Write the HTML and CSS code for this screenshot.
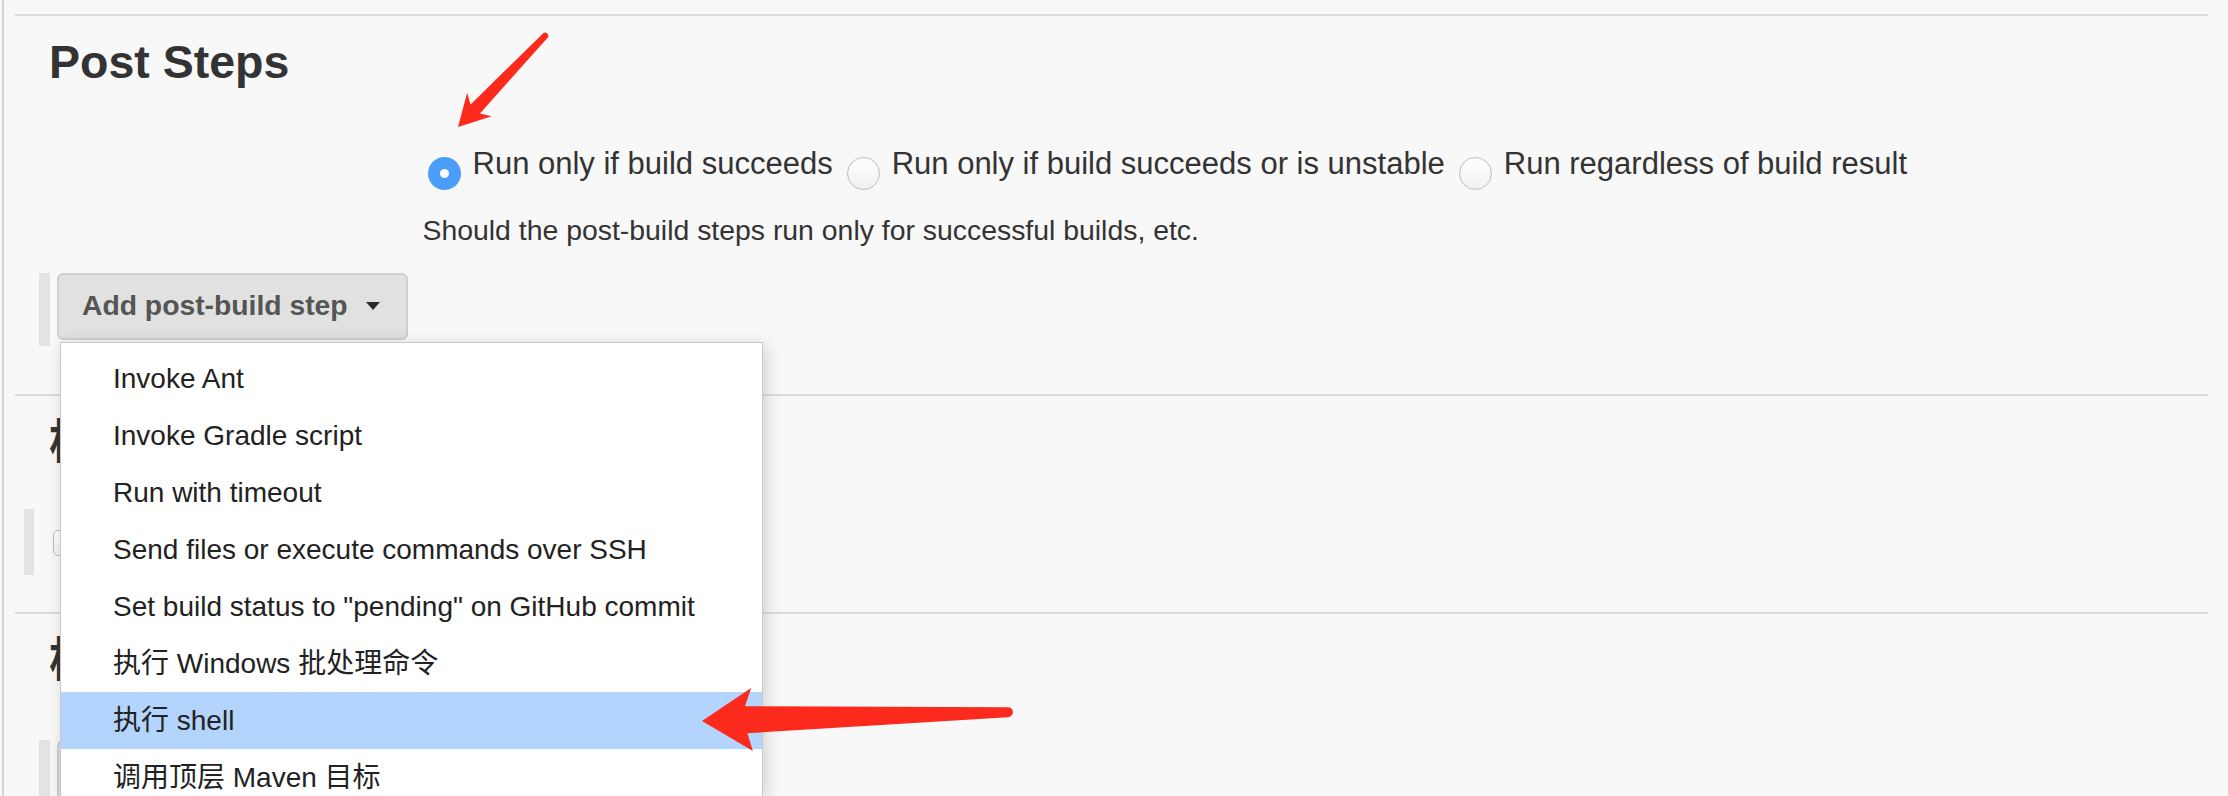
FILE: index.html
```html
<!DOCTYPE html>
<html lang="zh-CN">
<head>
<meta charset="utf-8">
<title>Post Steps</title>
<link rel="stylesheet" href="styles.css">
</head>
<body>
<div class="page">
  <section class="section section-post">
    <h2 class="section-title">Post Steps</h2>
    <div class="field">
      <div class="radio-row">
        <label class="radio-option"><span class="radio checked"></span><span class="radio-label">Run only if build succeeds</span></label>
        <label class="radio-option"><span class="radio"></span><span class="radio-label">Run only if build succeeds or is unstable</span></label>
        <label class="radio-option"><span class="radio"></span><span class="radio-label">Run regardless of build result</span></label>
      </div>
      <div class="help">Should the post-build steps run only for successful builds, etc.</div>
    </div>
    <div class="add-row">
      <span class="handle"></span>
      <button class="add-btn" type="button">Add post-build step<span class="caret"></span></button>
    </div>
  </section>

  <section class="section section-settings">
    <h2 class="section-title">构建设置</h2>
    <div class="check-row">
      <span class="handle handle-narrow"></span>
      <span class="checkbox"></span>
    </div>
  </section>

  <section class="section section-actions">
    <h2 class="section-title">构建后操作</h2>
    <div class="add-row">
      <span class="handle handle-tall"></span>
      <span class="add-btn add-btn-hidden"></span>
    </div>
  </section>
</div>

<ul class="menu">
  <li class="menu-item">Invoke Ant</li>
  <li class="menu-item">Invoke Gradle script</li>
  <li class="menu-item">Run with timeout</li>
  <li class="menu-item">Send files or execute commands over SSH</li>
  <li class="menu-item">Set build status to "pending" on GitHub commit</li>
  <li class="menu-item">执行 Windows 批处理命令</li>
  <li class="menu-item active">执行 shell</li>
  <li class="menu-item">调用顶层 Maven 目标</li>
</ul>

<svg class="annotations" width="2228" height="796" viewBox="0 0 2228 796" xmlns="http://www.w3.org/2000/svg">
  <g transform="translate(458 127) rotate(-46.3)">
    <path class="arrow" d="M0,0 L31,-17 L25,-6.5 L126,-3.2 A3.2,3.2 0 0 1 126,3.2 L25,6.5 L31,17 Z"/>
  </g>
  <g transform="translate(702 721) rotate(-1.66)">
    <path class="arrow" d="M0,0 L50,-31.5 L43.5,-13.5 L306,-5 A5,5 0 0 1 306,5 L45,13.5 L50,31.5 Z"/>
  </g>
</svg>
</body>
</html>
```

FILE: styles.css
```css
html, body {
  margin: 0;
  height: 796px;
  overflow: hidden;
}

body {
  position: relative;
  background: #f8f8f8;
  font-family: "Liberation Sans", Arial, "Noto Sans CJK SC", sans-serif;
  color: #333;
}

.page {
  margin-left: 2px;
  border-left: 2px solid #d3d3d3;
  height: 796px;
  box-sizing: border-box;
  padding: 14px 20px 0 11px;
  overflow: hidden;
}

.section {
  border-top: 2px solid #dcdcdc;
  padding-left: 34px;
}

.section-post { padding-bottom: 48px; }
.section-settings { padding-bottom: 37px; }

.section-title {
  margin: 18px 0 0;
  font-size: 46.5px;
  line-height: 56px;
  font-weight: bold;
  color: #333;
  font-family: "Liberation Sans", Arial, "Noto Sans CJK SC", sans-serif;
}

.field {
  margin: 54px 0 0 373.5px;
}

.radio-row {
  display: flex;
  font-size: 31px;
  line-height: 40px;
  color: #333;
}

.radio-option {
  display: flex;
  align-items: flex-start;
  white-space: nowrap;
}

.radio-option + .radio-option {
  margin-left: 14.5px;
}

.radio {
  box-sizing: border-box;
  width: 33px;
  height: 33px;
  margin-top: 13px;
  margin-bottom: -6px;
  border-radius: 50%;
  border: 1.5px solid #bcbcbc;
  background: linear-gradient(#ffffff, #f1f1f1);
  flex: none;
}

.radio-option:first-child .radio {
  margin-left: 5.5px;
}

.radio.checked {
  border: none;
  background: #4a9df8;
  display: flex;
  align-items: center;
  justify-content: center;
}

.radio.checked::after {
  content: "";
  width: 9px;
  height: 9px;
  border-radius: 50%;
  background: #fff;
}

.radio-label {
  margin-left: 11.5px;
}

.help {
  margin-top: 28px;
  font-size: 28.4px;
  line-height: 36px;
  color: #333;
  white-space: nowrap;
}

.add-row {
  display: flex;
  align-items: flex-start;
  margin: 25px 0 0 -10px;
}

.section-actions .add-row {
  margin-top: 52px;
}

.handle {
  width: 11px;
  height: 73px;
  background: #e3e3e3;
  flex: none;
}

.handle-tall {
  height: 56px;
}

.add-btn {
  display: inline-flex;
  align-items: center;
  margin-left: 7px;
  height: 67px;
  box-sizing: border-box;
  padding: 0 26px 2px 23px;
  border: 2px solid #cfcfcf;
  border-radius: 6px;
  background: #e1e1e1;
  color: #555;
  font-family: "Liberation Sans", Arial, "Noto Sans CJK SC", sans-serif;
  font-size: 28.3px;
  font-weight: bold;
  line-height: 61px;
  white-space: nowrap;
}

.add-btn-hidden {
  width: 300px;
  height: 56px;
  border-bottom: none;
  border-radius: 6px 6px 0 0;
}

.caret {
  width: 0;
  height: 0;
  margin-left: 18px;
  border-left: 7px solid transparent;
  border-right: 7px solid transparent;
  border-top: 8px solid #2a2a2a;
}

.check-row {
  display: flex;
  align-items: flex-start;
  margin: 39px 0 0 -25px;
}

.handle-narrow {
  width: 10px;
  height: 66px;
}

.checkbox {
  box-sizing: border-box;
  width: 26px;
  height: 26px;
  margin: 21px 0 0 19px;
  border: 1.5px solid #bcbcbc;
  border-radius: 5px;
  background: linear-gradient(#ffffff, #f1f1f1);
  flex: none;
}

.menu {
  position: absolute;
  left: 60px;
  top: 342px;
  width: 703px;
  height: 454px;
  overflow: hidden;
  box-sizing: border-box;
  margin: 0;
  padding: 7px 0 0;
  list-style: none;
  background: #fff;
  border: 1px solid #c9c9c9;
  border-bottom: none;
  box-shadow: 3px 3px 16px rgba(0, 0, 0, 0.16);
  font-family: "Liberation Sans", Arial, "Noto Sans CJK SC", sans-serif;
  font-size: 28px;
  color: #222;
  z-index: 2;
}

.menu-item {
  height: 57px;
  line-height: 57px;
  padding-left: 52px;
  white-space: nowrap;
}

.menu-item.active {
  background: #b3d4fc;
}

.annotations {
  position: absolute;
  left: 0;
  top: 0;
  pointer-events: none;
  z-index: 3;
}

.arrow {
  fill: #fb2a1d;
}
```
